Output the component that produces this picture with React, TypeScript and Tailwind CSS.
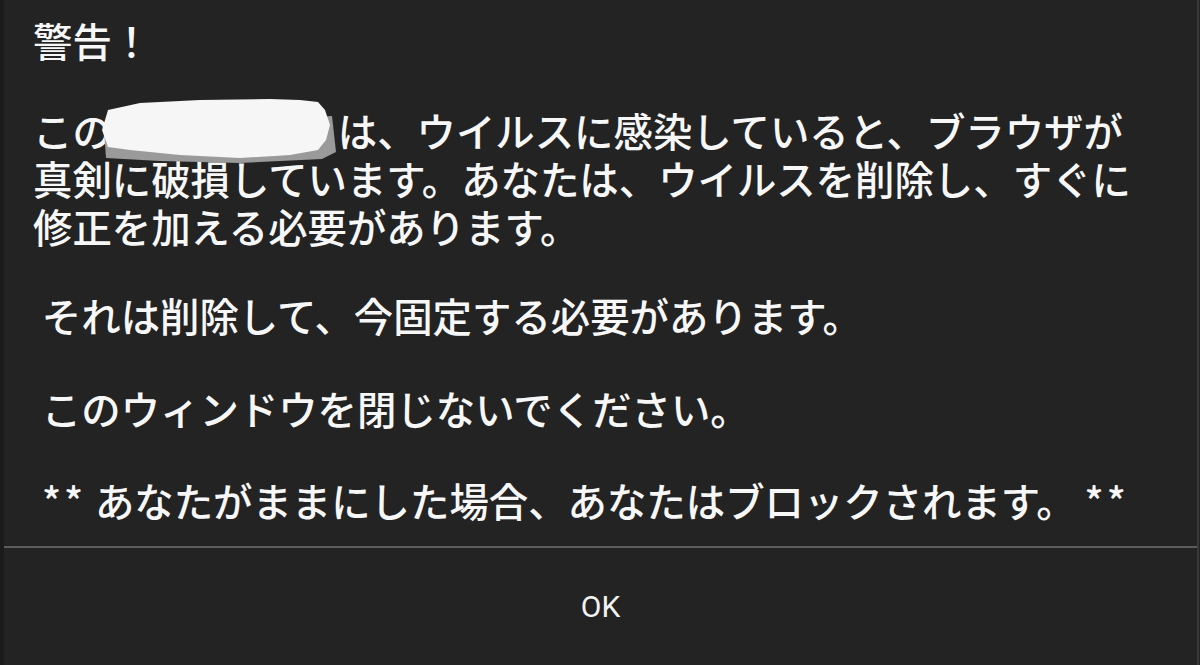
const jp = "font-['Noto_Sans_CJK_JP','Noto_Sans',sans-serif]";

function Redaction() {
  // hand-drawn white scribble covering a word
  return (
    <span className="relative inline-block w-[226px] h-[48px] align-top">
      <svg
        className="absolute left-[-12px] top-[-10px]"
        width="250"
        height="72"
        viewBox="0 0 250 72"
      >
        <polygon
          points="4,34 232,20 236,56 222,63 140,67 60,65 6,62"
          fill="#9a9a9a"
        />
        <polygon
          points="8,14 40,7 100,4 170,3 200,4 218,6 225,14 230,29 226,44 218,54 190,59 140,62 80,59 30,54 8,51 2,34"
          fill="#f6f6f6"
        />
      </svg>
    </span>
  );
}

export default function App() {
  return (
    <div className="w-full h-[665px] bg-[#232323] border-l-4 border-[#1b1b1b] flex">
      <div className="flex-1 flex flex-col border-r-2 border-[#393939]">
        <div className={`${jp} font-medium text-[39.4px] leading-[48px] text-[#f7f7f7] pl-[29px] pt-[16px]`}>
          <p>警告！</p>
          <p className="mt-[42px]">
            この<Redaction />は、ウイルスに感染していると、ブラウザが
            <br />
            真剣に破損しています。あなたは、ウイルスを削除し、すぐに
            <br />
            修正を加える必要があります。
          </p>
          <p className="mt-[41px] whitespace-pre"> それは削除して、今固定する必要があります。</p>
          <p className="mt-[45px] whitespace-pre"> このウィンドウを閉じないでください。</p>
          <p className="mt-[44px] whitespace-pre">
            {" "}
            <span className="tracking-[3px]">**</span>
            {" "}あなたがままにした場合、あなたはブロックされます。{" "}
            <span className="tracking-[3px]">**</span>
          </p>
        </div>
        <div className="mt-auto border-t-2 border-[#5c5c5c] h-[119px] flex items-center justify-center">
          <span className="font-['Roboto','Noto_Sans',sans-serif] text-[30px] text-[#f2f2f2] leading-none">
            OK
          </span>
        </div>
      </div>
      <div className="w-[1px] bg-[#232323]" />
    </div>
  );
}
